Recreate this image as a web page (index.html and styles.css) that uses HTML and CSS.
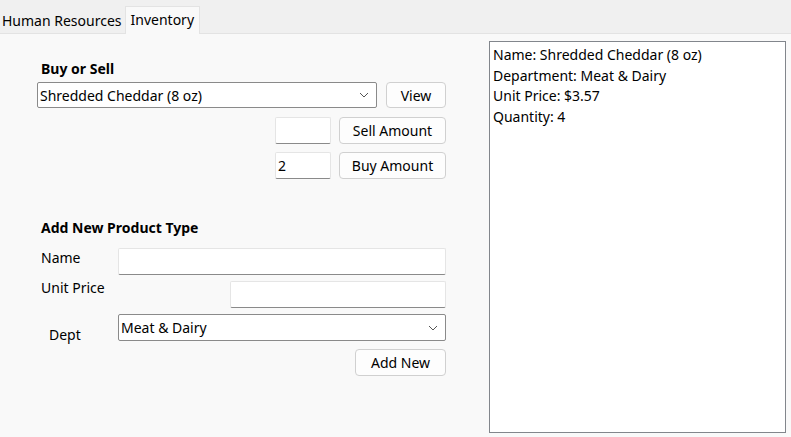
FILE: index.html
```html
<!DOCTYPE html>
<html>
<head>
<meta charset="utf-8">
<link rel="stylesheet" href="styles.css">
</head>
<body>
<div class="tabs">
  <div class="tab">Human Resources</div>
  <div class="tab active">Inventory</div>
</div>
<div class="page">
  <div class="left">
    <div class="heading h1">Buy or Sell</div>
    <div class="row r-combo">
      <div class="combo wide"><span>Shredded Cheddar (8 oz)</span><svg class="chev" width="10" height="6" viewBox="0 0 10 6"><path d="M1 1 L5 5 L9 1" fill="none" stroke="#555" stroke-width="1"/></svg></div>
      <div class="btn view">View</div>
    </div>
    <div class="row r-amt">
      <div class="text small"></div>
      <div class="btn amt">Sell Amount</div>
    </div>
    <div class="row r-amt2">
      <div class="text small">2</div>
      <div class="btn amt">Buy Amount</div>
    </div>
    <div class="heading h2">Add New Product Type</div>
    <div class="form">
      <div class="frow f-name">
        <span class="lbl">Name</span>
        <div class="text fname"></div>
      </div>
      <div class="frow f-price">
        <span class="lbl price">Unit Price</span>
        <div class="text fprice"></div>
      </div>
      <div class="frow f-dept">
        <span class="lbl dept">Dept</span>
        <div class="combo fdept"><span>Meat &amp; Dairy</span><svg class="chev" width="10" height="6" viewBox="0 0 10 6"><path d="M1 1 L5 5 L9 1" fill="none" stroke="#555" stroke-width="1"/></svg></div>
      </div>
      <div class="frow f-add">
        <div class="btn add">Add New</div>
      </div>
    </div>
  </div>
  <div class="list">
    <div>Name: Shredded Cheddar (8 oz)</div>
    <div>Department: Meat &amp; Dairy</div>
    <div>Unit Price: $3.57</div>
    <div>Quantity: 4</div>
  </div>
</div>
</body>
</html>
```
FILE: styles.css
```css
html, body {
  margin: 0;
  padding: 0;
  background: #f9f9f9;
  font-family: "Noto Sans", "Open Sans", sans-serif;
  font-size: 14px;
  color: #000;
}
.tabs {
  height: 34px;
  background: #f0f0f0;
  display: flex;
  align-items: flex-end;
  border-bottom: 1px solid #e3e3e3;
  box-sizing: border-box;
}
.tab {
  height: 25px;
  padding: 0 3px 0 2px;
  line-height: 25px;
  box-sizing: border-box;
}
.tab.active {
  height: 28px;
  line-height: 26px;
  background: #f9f9f9;
  border: 1px solid #e3e3e3;
  border-bottom: none;
  padding: 0 5px;
  margin-bottom: -1px;
}
.page {
  display: flex;
  align-items: flex-start;
}
.left {
  margin-left: 37px;
  width: 409px;
}
.heading {
  font-weight: bold;
  padding-left: 4px;
  line-height: 20px;
}
.h1 { margin-top: 25px; }
.row {
  display: flex;
  justify-content: flex-end;
  align-items: center;
  gap: 8px;
}
.r-combo { margin-top: 3px; gap: 9px; }
.r-amt { margin-top: 9px; }
.r-amt2 { margin-top: 8px; }
.combo {
  height: 26px;
  border: 1px solid #8a8a8a;
  border-radius: 2px;
  background: #fff;
  box-sizing: border-box;
  display: flex;
  align-items: center;
  justify-content: space-between;
  padding: 0 7px 0 2px;
}
.combo.wide { width: 340px; }
.chev { display: block; }
.btn {
  height: 26px;
  box-sizing: border-box;
  border: 1px solid #d0d0d0;
  border-radius: 4px;
  background: #fdfdfd;
  display: flex;
  align-items: center;
  justify-content: center;
}
.btn.view { width: 60px; }
.btn.amt { width: 107px; height: 27px; }
.text {
  height: 27px;
  box-sizing: border-box;
  background: #fff;
  border: 1px solid #e5e5e5;
  border-bottom: 1px solid #8a8a8a;
  border-radius: 2px;
  display: flex;
  align-items: center;
  padding-left: 2px;
}
.text.small { width: 56px; }
.h2 { margin-top: 39px; }
.form { margin-top: 10px; }
.frow {
  display: flex;
  justify-content: space-between;
  align-items: flex-start;
}
.lbl {
  padding-left: 4px;
  line-height: 20px;
}
.lbl.price { margin-top: -3px; }
.lbl.dept { padding-left: 12px; margin-top: 11px; }
.text.fname { width: 328px; }
.f-price { margin-top: 6px; }
.text.fprice { width: 216px; }
.f-dept { margin-top: 6px; }
.combo.fdept { width: 328px; height: 27px; }
.f-add { margin-top: 4px; justify-content: flex-end; }
.btn.add { width: 91px; height: 27px; }
.list {
  margin-left: 43px;
  margin-top: 7px;
  width: 297px;
  height: 392px;
  box-sizing: border-box;
  border: 1px solid #82868c;
  background: #fff;
  padding: 3px 3px;
  line-height: 20.7px;
}
```
